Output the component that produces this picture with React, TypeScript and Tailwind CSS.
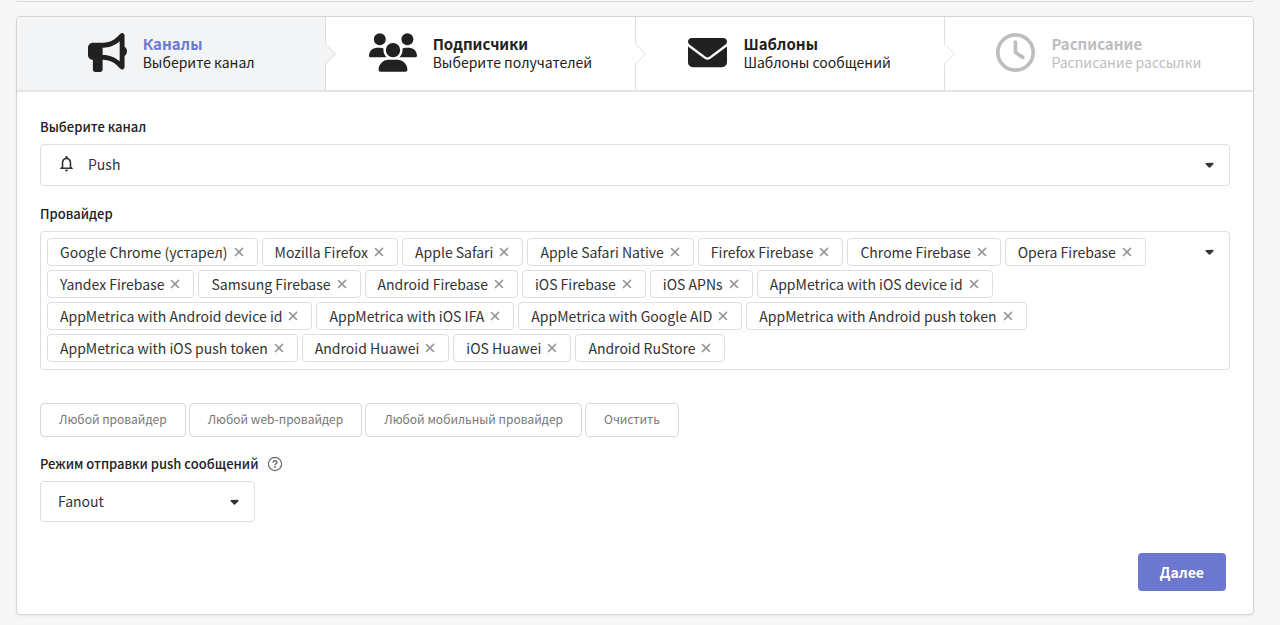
import { useState } from "react";
import type { ReactNode } from "react";
import { FaBullhorn, FaUsers, FaEnvelope, FaRegClock, FaCaretDown, FaXmark } from "react-icons/fa6";
import { MdNotificationsNone } from "react-icons/md";

type Step = { title: string; text: string; icon: ReactNode; state?: "active" | "disabled" };

const steps: Step[] = [
  { title: "Каналы", text: "Выберите канал", icon: <FaBullhorn className="size-[39px]" />, state: "active" },
  { title: "Подписчики", text: "Выберите получателей", icon: <FaUsers className="h-[39px] w-[48px]" /> },
  { title: "Шаблоны", text: "Шаблоны сообщений", icon: <FaEnvelope className="size-[39px]" /> },
  { title: "Расписание", text: "Расписание рассылки", icon: <FaRegClock className="size-[39px]" />, state: "disabled" },
];

const allProviders = [
  "Google Chrome (устарел)",
  "Mozilla Firefox",
  "Apple Safari",
  "Apple Safari Native",
  "Firefox Firebase",
  "Chrome Firebase",
  "Opera Firebase",
  "Yandex Firebase",
  "Samsung Firebase",
  "Android Firebase",
  "iOS Firebase",
  "iOS APNs",
  "AppMetrica with iOS device id",
  "AppMetrica with Android device id",
  "AppMetrica with iOS IFA",
  "AppMetrica with Google AID",
  "AppMetrica with Android push token",
  "AppMetrica with iOS push token",
  "Android Huawei",
  "iOS Huawei",
  "Android RuStore",
];

const webProviders = allProviders.filter((p) => /Chrome|Firefox|Safari|Opera|Yandex/.test(p));
const mobileProviders = allProviders.filter((p) => !webProviders.includes(p));

function StepItem({ step, last }: { step: Step; last: boolean }) {
  const active = step.state === "active";
  const disabled = step.state === "disabled";
  return (
    <li className={`relative flex-1 ${last ? "rounded-tr" : "border-r border-[#dededf]"} ${active ? "rounded-tl bg-[#f3f4f5]" : "bg-white"}`}>
      <button
        type="button"
        disabled={disabled}
        aria-current={active ? "step" : undefined}
        className={`flex h-[73px] w-full items-center justify-center gap-4 pb-0.5 text-left ${disabled ? "text-[#bdbdbe]" : "text-[#212121]"}`}
      >
        {step.icon}
        <span className="flex flex-col text-sm leading-[18px]">
          <span className={`text-[15px] leading-[18px] font-bold ${active ? "text-[#6c78d0]" : ""}`}>{step.title}</span>
          <span>{step.text}</span>
        </span>
      </button>
      {!last && (
        <svg viewBox="0 0 12 22" className="absolute top-[26px] -right-3 z-10 h-[22px] w-3" aria-hidden="true">
          <path d="M0 0 L11 11 L0 22 Z" className={active ? "fill-[#f3f4f5]" : "fill-white"} />
          <path d="M0 0.5 L10.5 11 L0 21.5" fill="none" stroke="#dededf" />
        </svg>
      )}
    </li>
  );
}

export default function App() {
  const [providers, setProviders] = useState(allProviders);
  const quick = [
    { label: "Любой провайдер", value: allProviders },
    { label: "Любой web-провайдер", value: webProviders },
    { label: "Любой мобильный провайдер", value: mobileProviders },
    { label: "Очистить", value: [] },
  ];

  return (
    <div className="min-h-screen bg-[#f7f7f7] pr-[26px] pb-[10px] pl-4 font-['Noto_Sans_CJK_SC','Noto_Sans',sans-serif] text-sm text-[#333333]">
      <div className="h-[2px] rounded-b border-b border-[#dadadb]" />
      <main className="mt-[14px] rounded border border-[#d4d4d5] bg-white shadow-[0_1px_2px_rgba(34,36,38,0.08)]">
        <ol className="flex border-b-2 border-[#e3e4e4]">
          {steps.map((step, i) => (
            <StepItem key={step.title} step={step} last={i === steps.length - 1} />
          ))}
        </ol>

        <form className="px-[23px] pt-[26px] pb-[23px]" onSubmit={(e) => e.preventDefault()}>
          <label htmlFor="channel" className="block text-[13px] leading-[18px] font-medium text-[#212121]">
            Выберите канал
          </label>
          <div className="relative mt-2">
            <MdNotificationsNone className="pointer-events-none absolute top-[10px] left-[17px] size-[19px]" />
            <select
              id="channel"
              className="h-[42px] w-full appearance-none rounded border border-[#dededf] bg-white pr-10 pb-0.5 pl-[47px]"
            >
              <option>Push</option>
            </select>
            <FaCaretDown className="pointer-events-none absolute top-[14px] right-[14px] size-[13px]" />
          </div>

          <div id="provider-label" className="mt-[19px] text-[13px] leading-[18px] font-medium text-[#212121]">
            Провайдер
          </div>
          <div
            role="group"
            aria-labelledby="provider-label"
            className="mt-2 flex items-start justify-between rounded border border-[#dededf] pt-[6px] pr-[13px] pb-[7px] pl-[6px]"
          >
            <ul className="flex flex-1 flex-wrap gap-1 pr-12">
              {providers.map((name) => (
                <li key={name} className="flex h-7 items-center gap-1 rounded border border-[#dededf] pr-[11px] pl-3">
                  {name}
                  <button
                    type="button"
                    aria-label={`Удалить ${name}`}
                    onClick={() => setProviders(providers.filter((p) => p !== name))}
                  >
                    <FaXmark className="size-[14px] text-[#999999]" />
                  </button>
                </li>
              ))}
            </ul>
            <button type="button" aria-label="Показать список" className="pt-[7px]">
              <FaCaretDown className="size-[13px]" />
            </button>
          </div>

          <div className="mt-[33px] flex flex-wrap gap-[3px]">
            {quick.map((q) => (
              <button
                key={q.label}
                type="button"
                onClick={() => setProviders(q.value)}
                className="h-[34px] rounded border border-[#d8d8d9] px-[18px] pb-0.5 text-xs text-[#777777]"
              >
                {q.label}
              </button>
            ))}
          </div>

          <div className="mt-[18px] flex items-center gap-2 leading-[18px]">
            <label htmlFor="mode" className="text-[13px] font-medium text-[#212121]">
              Режим отправки push сообщений
            </label>
            <svg viewBox="0 0 16 16" className="size-4 text-[#666666]" fill="none" stroke="currentColor" aria-hidden="true">
              <circle cx="8" cy="8" r="6.6" strokeWidth="1.2" />
              <path d="M6.1 6.6 C6.1 4.2 9.9 4.2 9.9 6.4 C9.9 7.8 8 7.8 8 9.2" strokeWidth="1.4" />
              <circle cx="8" cy="11" r="0.9" fill="currentColor" stroke="none" />
            </svg>
          </div>
          <div className="relative mt-2 w-[215px]">
            <select id="mode" className="h-[41px] w-full appearance-none rounded border border-[#dededf] bg-white pr-10 pb-0.5 pl-[17px]">
              <option>Fanout</option>
            </select>
            <FaCaretDown className="pointer-events-none absolute top-[14px] right-[14px] size-[13px]" />
          </div>

          <div className="mt-[31px] flex justify-end pr-1">
            <button type="submit" className="h-[38px] rounded bg-[#6c78d0] px-[22px] font-bold text-white">
              Далее
            </button>
          </div>
        </form>
      </main>
    </div>
  );
}
